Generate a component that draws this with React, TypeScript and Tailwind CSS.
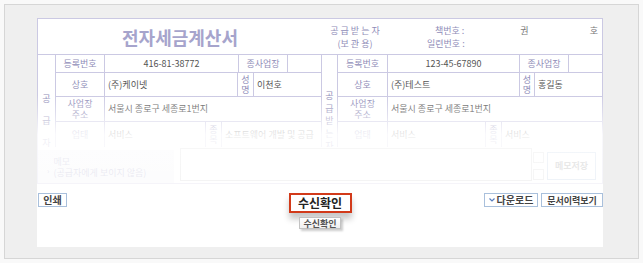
export default function App() {
  const lb = "border-[#cbc9e3]";
  return (
    <div className="w-[643px] h-[263px] bg-[#f9f9f9] p-[4px] font-['Noto_Sans_CJK_KR','Noto_Sans',sans-serif]">
      <div className="h-full border border-[#d6d6d6] bg-[#efefef] pl-[32px] pt-[13px] pr-[35px] pb-[11px]">
        <div className="relative h-[229px] bg-white flex flex-col">
          {/* table + memo */}
          <div className={`w-[566px] border-l border-r border-t border-b ${lb} flex flex-col`}>
            {/* title row */}
            <div className={`h-[36px] flex border-b ${lb}`}>
              <div className="w-[284px] shrink-0 flex items-center justify-center pt-[1px]">
                <span className="text-[18px] font-bold text-[#a6a4cc]">전자세금계산서</span>
              </div>
              <div className="w-[280px] shrink-0 flex items-center text-[9px] text-[#8f8db8] leading-[13px]">
                <div className="w-[66px] shrink-0 text-center whitespace-nowrap">
                  <div>공 급 받 는 자</div>
                  <div>(보 관 용)</div>
                </div>
                <div className="w-[214px] shrink-0 whitespace-nowrap">
                  <div className="flex">
                    <span className="ml-[47px]">책번호 :</span>
                    <span className="ml-[56px] text-[#777]">권</span>
                    <span className="ml-auto pr-[4px] text-[#777]">호</span>
                  </div>
                  <div className="flex">
                    <span className="ml-[39px]">일련번호 :</span>
                  </div>
                </div>
              </div>
            </div>
            {/* body */}
            <div className="h-[92px] overflow-hidden flex text-[9px]">
              {/* left half */}
              <div className={`w-[284px] shrink-0 flex border-r ${lb}`}>
                <div className={`w-[18px] border-r ${lb} flex flex-col items-center pt-[33px] leading-[22px] text-[#8f8db8] text-[9px]`}>
                  <span>공</span>
                  <span>급</span>
                  <span>자</span>
                </div>
                <div className="flex-1 flex flex-col">
                  <div className={`h-[19px] flex border-b ${lb}`}>
                    <div className={`w-[49px] border-r ${lb} flex items-center justify-center text-[#8f8db8]`}>등록번호</div>
                    <div className={`w-[134px] border-r ${lb} flex items-center justify-center text-[#555]`}>416-81-38772</div>
                    <div className={`w-[49px] border-r ${lb} flex items-center justify-center text-[#8f8db8]`}>종사업장</div>
                    <div className="flex-1"></div>
                  </div>
                  <div className={`h-[25px] flex border-b ${lb}`}>
                    <div className={`w-[49px] border-r ${lb} flex items-center justify-center text-[#8f8db8]`}>상호</div>
                    <div className={`w-[133px] border-r ${lb} flex items-center pl-[3px] text-[#555]`}>(주)케이넷</div>
                    <div className={`w-[16px] border-r ${lb} flex flex-col items-center justify-center leading-[10px] text-[#8f8db8]`}>
                      <span>성</span>
                      <span>명</span>
                    </div>
                    <div className="flex-1 flex items-center pl-[3px] text-[#555]">이천호</div>
                  </div>
                  <div className={`h-[26px] flex border-b ${lb}`}>
                    <div className={`w-[49px] border-r ${lb} flex flex-col items-center justify-center leading-[11px] text-[#8f8db8]`}>
                      <span>사업장</span>
                      <span>주소</span>
                    </div>
                    <div className="flex-1 flex items-center pl-[3px] text-[#555]">서울시 종로구 세종로1번지</div>
                  </div>
                  <div className="h-[26px] flex">
                    <div className={`w-[49px] border-r ${lb} flex items-center justify-center text-[#8f8db8]`}>업태</div>
                    <div className={`w-[101px] border-r ${lb} flex items-center pl-[3px] text-[#555]`}>서비스</div>
                    <div className={`w-[16px] border-r ${lb} flex flex-col items-center justify-center leading-[10px] text-[#8f8db8]`}>
                      <span>종</span>
                      <span>목</span>
                    </div>
                    <div className="flex-1 flex items-center pl-[3px] text-[#555] whitespace-nowrap overflow-hidden">소프트웨어 개발 및 공급</div>
                  </div>
                </div>
              </div>
              {/* right half */}
              <div className="w-[280px] shrink-0 flex">
                <div className={`w-[16px] border-r ${lb} flex flex-col items-center pt-[35px] leading-[12.5px] text-[#8f8db8] text-[9px]`}>
                  <span>공</span>
                  <span>급</span>
                  <span>받</span>
                  <span>는</span>
                  <span>자</span>
                </div>
                <div className="flex-1 flex flex-col">
                  <div className={`h-[19px] flex border-b ${lb}`}>
                    <div className={`w-[50px] border-r ${lb} flex items-center justify-center text-[#8f8db8]`}>등록번호</div>
                    <div className={`w-[132px] border-r ${lb} flex items-center justify-center text-[#555]`}>123-45-67890</div>
                    <div className={`w-[49px] border-r ${lb} flex items-center justify-center text-[#8f8db8]`}>종사업장</div>
                    <div className="flex-1"></div>
                  </div>
                  <div className={`h-[25px] flex border-b ${lb}`}>
                    <div className={`w-[50px] border-r ${lb} flex items-center justify-center text-[#8f8db8]`}>상호</div>
                    <div className={`w-[132px] border-r ${lb} flex items-center pl-[3px] text-[#555]`}>(주)테스트</div>
                    <div className={`w-[15px] border-r ${lb} flex flex-col items-center justify-center leading-[10px] text-[#8f8db8]`}>
                      <span>성</span>
                      <span>명</span>
                    </div>
                    <div className="flex-1 flex items-center pl-[3px] text-[#555]">홍길동</div>
                  </div>
                  <div className={`h-[26px] flex border-b ${lb}`}>
                    <div className={`w-[50px] border-r ${lb} flex flex-col items-center justify-center leading-[11px] text-[#8f8db8]`}>
                      <span>사업장</span>
                      <span>주소</span>
                    </div>
                    <div className="flex-1 flex items-center pl-[3px] text-[#555]">서울시 종로구 세종로1번지</div>
                  </div>
                  <div className="h-[26px] flex">
                    <div className={`w-[50px] border-r ${lb} flex items-center justify-center text-[#8f8db8]`}>업태</div>
                    <div className={`w-[98px] border-r ${lb} flex items-center pl-[3px] text-[#555]`}>서비스</div>
                    <div className={`w-[16px] border-r ${lb} flex flex-col items-center justify-center leading-[10px] text-[#8f8db8]`}>
                      <span>종</span>
                      <span>목</span>
                    </div>
                    <div className="flex-1 flex items-center pl-[3px] text-[#555]">서비스</div>
                  </div>
                </div>
              </div>
            </div>
            {/* memo row */}
            <div className="h-[36px] flex text-[9px]">
              <div className="w-[136px] mt-[3px] bg-[#f1f1f6] flex items-center pl-[9px] gap-[4px] text-[#8f8db8] leading-[11px]">
                <span className="text-[8px] self-end mb-[7px]">›</span>
                <div className="flex flex-col">
                  <span>메모</span>
                  <span>(공급자에게 보이지 않음)</span>
                </div>
              </div>
              <div className="ml-[6px] w-[352px] h-[33px] mt-[1px] border border-[#c8c8c8] bg-white"></div>
              <div className="w-[13px] flex flex-col gap-[6px] pt-[5px] pl-[1px]">
                <div className="w-[11px] h-[11px] border border-[#ccc] bg-white"></div>
                <div className="w-[11px] h-[11px] border border-[#ccc] bg-white"></div>
              </div>
              <div className="ml-[2px] mt-[5px] w-[49px] h-[28px] border border-[#a9c0dc] bg-white flex items-center justify-center text-[#777] font-bold">메모저장</div>
            </div>
          </div>
          {/* fade overlay */}
          <div className="absolute left-0 right-0 top-[77px] h-[90px] bg-[linear-gradient(to_bottom,rgba(255,255,255,0)_0%,rgba(255,255,255,0.35)_19%,rgba(255,255,255,0.88)_44%,rgba(255,255,255,0.8)_100%)]"></div>
          {/* bottom buttons */}
          <div className="grid grid-cols-[1fr_auto_1fr] pt-[9px]">
            <div className="pl-[1px]">
              <div className="w-[29px] h-[14px] border border-[#a9c0dc] bg-white flex items-center justify-center text-[10px] font-bold text-[#444] leading-none">인쇄</div>
            </div>
            <div className="flex flex-col items-center">
              <div className="w-[63px] h-[20px] border-2 border-[#d23a1a] bg-white flex items-center justify-center text-[12px] font-bold text-[#222] leading-none shadow-[0_6px_6px_rgba(0,0,0,0.22)]">수신확인</div>
              <div className="mt-[4px] w-[42px] h-[12px] border border-[#c2c2c2] bg-[linear-gradient(#ffffff,#f0f0f0)] flex items-center justify-center text-[9px] font-bold text-[#555] leading-none shadow-[2px_2px_2px_rgba(0,0,0,0.2)]">수신확인</div>
            </div>
            <div className="flex justify-end gap-[3px]">
              <div className="w-[54px] h-[14px] border border-[#a9c0dc] bg-white flex items-center justify-center gap-[2px] text-[10px] font-bold text-[#444] leading-none">
                <svg width="6" height="4" viewBox="0 0 6 4"><polyline points="0.5,0.5 3,3 5.5,0.5" fill="none" stroke="#5a7fbf" strokeWidth="1.2" /></svg>
                <span>다운로드</span>
              </div>
              <div className="w-[62px] h-[14px] border border-[#a9c0dc] bg-white flex items-center justify-center text-[9px] font-bold text-[#444] leading-none">문서이력보기</div>
            </div>
          </div>
        </div>
      </div>
    </div>
  );
}
